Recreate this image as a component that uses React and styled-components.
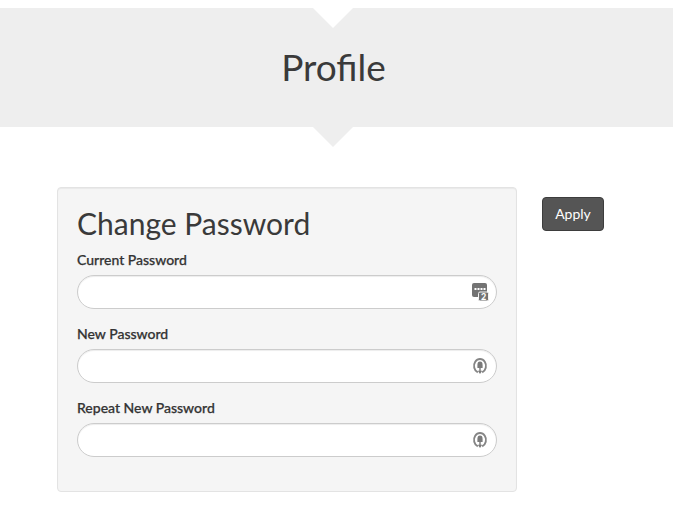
import React from "react";
import styled, { createGlobalStyle } from "styled-components";

const Global = createGlobalStyle`
  html, body { margin: 0; padding: 0; background: #fff; }
  body { font-family: Lato, "Liberation Sans", sans-serif; color: #333; }
  * { box-sizing: border-box; }
`;
const Page = styled.div`
  width: 673px;
  height: 515px;
  padding-top: 8px;
  overflow: hidden;
`;
const Banner = styled.header`
  position: relative;
  height: 119px;
  padding-right: 6px;
  background: #eee;
  display: flex;
  align-items: center;
  justify-content: center;
`;
const NotchTop = styled.span`
  position: absolute;
  top: 0;
  left: 313px;
  border-style: solid;
  border-width: 20px 20px 0 20px;
  border-color: #fff transparent transparent transparent;
`;
const NotchBottom = styled.span`
  position: absolute;
  top: 100%;
  left: 313px;
  border-style: solid;
  border-width: 20px 20px 0 20px;
  border-color: #eee transparent transparent transparent;
`;
const PageTitle = styled.h1`
  margin: -2px 0 0;
  font-size: 37px;
  font-weight: 400;
  line-height: 40px;
  color: #3a3a3a;
`;
const Content = styled.main`
  display: flex;
  align-items: flex-start;
  padding: 60px 0 0 57px;
  gap: 25px;
`;
const Card = styled.section`
  width: 460px;
  height: 305px;
  padding: 19px;
  background: #f5f5f5;
  border: 1px solid #e3e3e3;
  border-radius: 4px;
  box-shadow: inset 0 1px 1px rgba(0,0,0,0.05);
`;
const CardTitle = styled.h2`
  margin: 0 0 10px;
  font-size: 30px;
  font-weight: 400;
  line-height: 33px;
  color: #3a3a3a;
`;
const Field = styled.div`
  margin-bottom: 15px;
`;
const Label = styled.label`
  display: block;
  margin-bottom: 5px;
  font-size: 14px;
  font-weight: 500;
  line-height: 20px;
  color: #333;
  -webkit-text-stroke: 0.25px #333;
`;
const InputWrap = styled.div`
  position: relative;
  height: 34px;
`;
const Input = styled.input`
  display: block;
  width: 100%;
  height: 34px;
  padding: 6px 34px 6px 12px;
  background: #fff;
  border: 1px solid #ccc;
  border-radius: 17px;
  box-shadow: inset 0 1px 1px rgba(0,0,0,0.075);
  outline: none;
`;
const Icon = styled.svg`
  position: absolute;
  right: 8px;
  top: 8px;
  width: 18px;
  height: 18px;
`;
const ApplyButton = styled.button`
  margin-top: 10px;
  width: 62px;
  height: 34px;
  padding: 0;
  font-family: inherit;
  font-size: 14px;
  line-height: 20px;
  color: #fff;
  background: #555;
  border: 1px solid #3d3d3d;
  border-radius: 4px;
`;

const DotsIcon = () => (
  <Icon viewBox="0 0 18 18">
    <rect x="1" y="0" width="15" height="14" rx="2" fill="#737373" />
    <rect x="3.5" y="5" width="2" height="2" fill="#fff" />
    <rect x="6.5" y="5" width="2" height="2" fill="#fff" />
    <rect x="9.5" y="5" width="2" height="2" fill="#fff" />
    <rect x="12.5" y="5" width="2" height="2" fill="#fff" />
    <rect x="7.5" y="9" width="10" height="9" rx="1.5" fill="#737373" stroke="#f4f4f4" strokeWidth="1" />
    <text x="12.5" y="16.6" fontSize="9" fontWeight="900" textAnchor="middle" fill="#fff" fontFamily="Lato, sans-serif">2</text>
  </Icon>
);
const RefreshLockIcon = () => (
  <Icon viewBox="0 0 18 18">
    <path d="M6.8 15.3A6 6.9 0 1 1 11.2 15.3" fill="none" stroke="#858585" strokeWidth="1.9" />
    <path d="M6.4 11V8a2.6 3.4 0 0 1 5.2 0v3z" fill="#7a7a7a" />
    <path d="M9 11v3" stroke="#7a7a7a" strokeWidth="1.4" />
    <path d="M6.8 13.8h4.4L9 17z" fill="#7a7a7a" />
  </Icon>
);

const fields = [
  { label: "Current Password", icon: <DotsIcon /> },
  { label: "New Password", icon: <RefreshLockIcon /> },
  { label: "Repeat New Password", icon: <RefreshLockIcon /> },
];

export default function App() {
  return (
    <Page>
      <Global />
      <Banner>
        <NotchTop />
        <PageTitle>Profile</PageTitle>
        <NotchBottom />
      </Banner>
      <Content>
        <Card>
          <CardTitle>Change Password</CardTitle>
          {fields.map((f) => (
            <Field key={f.label}>
              <Label>{f.label}</Label>
              <InputWrap>
                <Input type="password" />
                {f.icon}
              </InputWrap>
            </Field>
          ))}
        </Card>
        <ApplyButton>Apply</ApplyButton>
      </Content>
    </Page>
  );
}
